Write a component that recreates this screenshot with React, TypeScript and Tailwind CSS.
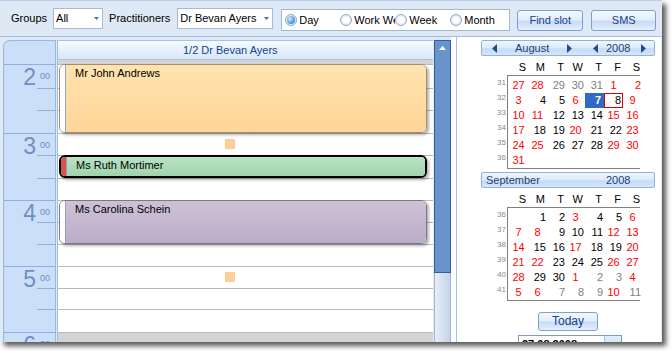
import React from 'react';

type Cell = { d: number | null; c: 'r' | 'k' | 'g'; sel?: boolean; box?: boolean; right?: boolean };

const r = (d: number, right = false): Cell => ({ d, c: 'r', right });
const k = (d: number): Cell => ({ d, c: 'k' });
const g = (d: number): Cell => ({ d, c: 'g' });

const august: { wk: number; cells: Cell[] }[] = [
  { wk: 31, cells: [r(27), r(28), g(29), g(30), g(31), r(1), r(2, true)] },
  { wk: 32, cells: [r(3), k(4), k(5), r(6), { d: 7, c: 'k', sel: true }, { d: 8, c: 'k', box: true }, r(9)] },
  { wk: 33, cells: [r(10), r(11), k(12), k(13), k(14), r(15), r(16)] },
  { wk: 34, cells: [r(17), k(18), k(19), r(20), k(21), k(22), r(23)] },
  { wk: 35, cells: [r(24), r(25), k(26), k(27), k(28), r(29), r(30)] },
  { wk: 36, cells: [r(31)] },
];

const september: { wk: number; cells: Cell[] }[] = [
  { wk: 36, cells: [{ d: null, c: 'k' }, k(1), k(2), r(3), k(4), k(5), r(6)] },
  { wk: 37, cells: [r(7), r(8), k(9), k(10), k(11), r(12), r(13)] },
  { wk: 38, cells: [r(14), k(15), k(16), r(17), k(18), k(19), r(20)] },
  { wk: 39, cells: [r(21), r(22), k(23), k(24), k(25), r(26), r(27)] },
  { wk: 40, cells: [r(28), k(29), k(30), r(1), g(2), g(3), r(4)] },
  { wk: 41, cells: [r(5), r(6), g(7), g(8), g(9), r(10), g(11)] },
];

// slot heights for each hour (20 min slots)
const hours = [
  { h: '2', rows: ['h-[24px]', 'h-[22px]', 'h-[23px]'] },
  { h: '3', rows: ['h-[22px]', 'h-[23px]', 'h-[22px]'] },
  { h: '4', rows: ['h-[22px]', 'h-[22px]', 'h-[22px]'] },
  { h: '5', rows: ['h-[22px]', 'h-[21px]', 'h-[23px]'] },
  { h: '6', rows: ['h-[22px]', 'h-[22px]', 'h-[22px]'] },
];

const Arrow = ({ dir, color = '#1f4e8c' }: { dir: 'l' | 'r' | 'd' | 'u'; color?: string }) => {
  if (dir === 'd')
    return (
      <svg width="5" height="3" viewBox="0 0 5 3">
        <polygon points="0,0 5,0 2.5,3" fill={color} />
      </svg>
    );
  if (dir === 'u')
    return (
      <svg width="7" height="4" viewBox="0 0 7 4">
        <polygon points="0,4 7,4 3.5,0" fill={color} />
      </svg>
    );
  return (
    <svg width="5" height="9" viewBox="0 0 5 9">
      {dir === 'l' ? <polygon points="5,0 5,9 0,4.5" fill={color} /> : <polygon points="0,0 0,9 5,4.5" fill={color} />}
    </svg>
  );
};

const Btn = ({ children, className }: { children: React.ReactNode; className: string }) => (
  <div
    className={`flex items-center justify-center rounded-[3px] border border-[#7f9fcf] bg-[linear-gradient(to_bottom,#f4f8fe_0%,#e3eefb_45%,#c8dcf6_55%,#d9e8fb_85%,#eaf2fd_100%)] text-[#15428b] ${className}`}
  >
    {children}
  </div>
);

const Select = ({ text, className }: { text: string; className: string }) => (
  <div className={`flex items-center h-[21px] bg-white border border-[#a5bcd9] pl-[2px] text-black ${className}`}>
    <span className="whitespace-nowrap">{text}</span>
    <span className="ml-auto mr-[3px] flex">
      <Arrow dir="d" color="#4a6fae" />
    </span>
  </div>
);

const Radio = ({ on, label }: { on?: boolean; label: string }) => (
  <div className="w-[55px] flex items-center overflow-hidden whitespace-nowrap">
    <span className="shrink-0 w-[12px] h-[12px] rounded-full border border-[#8ea8cb] bg-[radial-gradient(circle,#ffffff_35%,#c7d8ee_100%)] flex items-center justify-center">
      {on && (
        <span className="w-[8px] h-[8px] rounded-full bg-[radial-gradient(circle_at_35%_35%,#d8eeff_0%,#5aa2ea_55%,#2b6fc5_100%)]" />
      )}
    </span>
    <span className="ml-[2px] text-black">{label}</span>
  </div>
);

const Month = ({
  rows,
  header,
}: {
  rows: { wk: number; cells: Cell[] }[];
  header: React.ReactNode;
}) => (
  <div className="flex flex-col">
    {header}
    <div className="ml-[52px] mt-[4px] w-[133px] h-[15px] grid grid-cols-[repeat(7,19px)] text-black">
      {['S', 'M', 'T', 'W', 'T', 'F', 'S'].map((d, i) => (
        <div key={i} className="flex items-center justify-end pr-[2px]">
          {d}
        </div>
      ))}
    </div>
    <div className="ml-[40px] flex">
      <div className="w-[10px] pt-[3px] flex flex-col">
        {rows.map(row => (
          <div key={row.wk} className="h-[15px] pr-[3px] text-right text-[8px] leading-[10px] text-[#8a8a8a]">
            {row.wk}
          </div>
        ))}
      </div>
      <div className="w-[133px] border-l border-t border-b border-[#808080] pl-[1px] pt-[2px]">
        {rows.map(row => (
          <div key={row.wk} className="h-[15px] grid grid-cols-[repeat(7,19px)]">
            {row.cells.map((c, i) => {
              let cls = 'flex items-center ';
              if (c.sel) cls += 'justify-end pr-[3px] bg-[#316ac5] text-white font-bold';
              else if (c.box) cls += 'justify-end pr-[1px] border border-[#e00000] text-black';
              else if (c.c === 'r') cls += (c.right ? 'justify-end pr-[1px]' : 'justify-center') + ' text-[#ff0000]';
              else if (c.c === 'g') cls += 'justify-end pr-[1px] text-[#808080]';
              else cls += 'justify-end pr-[1px] text-black';
              return (
                <div key={i} className={cls}>
                  {c.d}
                </div>
              );
            })}
          </div>
        ))}
      </div>
    </div>
  </div>
);

const Appointment = ({
  name,
  className,
  body,
  strip,
  border,
}: {
  name: string;
  className: string;
  body: string;
  strip: string;
  border: string;
}) => (
  <div
    className={`absolute left-[1px] w-[368px] flex overflow-hidden rounded-[6px] shadow-[2px_2px_3px_rgba(0,0,0,0.3)] ${border} ${className}`}
  >
    <div className={`w-[6px] shrink-0 border-r border-[#8ea4cc] ${strip}`} />
    <div className={`flex-1 pl-[9px] pt-[2px] text-black ${body}`}>{name}</div>
  </div>
);

export default function App() {
  return (
    <div className="w-[672px] h-[351px] bg-white overflow-hidden font-['Liberation_Sans',Arial,sans-serif] text-[11px] leading-[13px]">
      <div className="w-[662px] h-[342px] flex flex-col overflow-hidden bg-[#e0eaf6] shadow-[4px_4px_5px_rgba(0,0,0,0.65)]">
        {/* toolbar */}
        <div className="h-[37px] shrink-0 flex items-start border-t border-b border-t-[#bcd0ec] border-b-[#a4bedf] bg-[#dfe9f6]">
          <div className="ml-[11px] mt-[7px] h-[21px] flex items-center text-black">Groups</div>
          <Select text="All" className="ml-[6px] mt-[7px] w-[50px]" />
          <div className="ml-[6px] mt-[7px] h-[21px] flex items-center text-black">Practitioners</div>
          <Select text="Dr Bevan Ayers" className="ml-[7px] mt-[7px] w-[96px]" />
          <div className="ml-[8px] mt-[8px] w-[229px] h-[22px] bg-white border border-[#a3b7d0] flex items-center pl-[3px]">
            <Radio on label="Day" />
            <Radio label="Work Week" />
            <Radio label="Week" />
            <Radio label="Month" />
          </div>
          <Btn className="ml-[7px] mt-[9px] w-[66px] h-[21px]">Find slot</Btn>
          <Btn className="ml-[8px] mt-[9px] w-[65px] h-[21px]">SMS</Btn>
        </div>

        {/* main */}
        <div className="flex-1 flex min-h-0">
          <div className="flex pt-[3px] pl-[3px] min-h-0">
            {/* time column */}
            <div className="w-[53px] shrink-0 flex flex-col bg-[#cbdff8] border-l border-r border-t border-[#98b7e1] rounded-tl-[7px] overflow-hidden text-[#6f8fc2]">
              <div className="h-[23px] shrink-0" />
              {hours.map(hr => (
                <div key={hr.h} className="flex flex-col shrink-0">
                  {hr.rows.map((h, i) =>
                    i === 0 ? (
                      <div key={i} className={`${h} border-t border-[#8db0de] flex justify-end items-start pr-[5px] pt-[1px]`}>
                        <span className="text-[23px] leading-[23px]">{hr.h}</span>
                        <span className="ml-[4px] mt-[6px] text-[9px] leading-[9px]">00</span>
                      </div>
                    ) : (
                      <div key={i} className={`${h} flex flex-col`}>
                        <div className="ml-[33px] border-t border-[#8db0de]" />
                      </div>
                    )
                  )}
                </div>
              ))}
            </div>

            {/* day column */}
            <div className="ml-[1px] w-[376px] shrink-0 flex flex-col bg-white border-l border-[#9dbbe3] overflow-hidden">
              <div className="h-[20px] shrink-0 flex items-center pl-[125px] border-t border-b border-[#a7c2e6] bg-[linear-gradient(to_bottom,#f7fbff,#d8e7f9)] text-[#15428b] whitespace-nowrap">
                1/2 Dr Bevan Ayers
              </div>
              <div className="h-[4px] shrink-0 bg-[#d4d4d4]" />
              <div className="relative flex flex-col">
                {hours.slice(0, 4).map(hr =>
                  hr.rows.map((h, i) => <div key={hr.h + i} className={`${h} shrink-0 border-t border-[#bababa]`} />)
                )}
                <div className="h-[30px] shrink-0 border-t border-[#bababa] bg-[#d3d3d3]" />

                <Appointment
                  name="Mr John Andrews"
                  className="top-0 h-[69px]"
                  border="border border-[#a68d68]"
                  strip="bg-white"
                  body="bg-[linear-gradient(to_bottom,#ffe3b0,#fdd597)]"
                />
                <div className="absolute left-[167px] top-[75px] w-[10px] h-[10px] bg-[#fbcf97]" />
                <Appointment
                  name="Ms Ruth Mortimer"
                  className="top-[91px] h-[23px]"
                  border="border-2 border-black"
                  strip="bg-[#d9534a]"
                  body="bg-[linear-gradient(to_bottom,#b8e3c4,#a2d3ad)]"
                />
                <Appointment
                  name="Ms Carolina Schein"
                  className="top-[136px] h-[44px]"
                  border="border border-[#7e7886]"
                  strip="bg-white"
                  body="bg-[linear-gradient(to_bottom,#cdc1d7,#bbadc6)]"
                />
                <div className="absolute left-[167px] top-[208px] w-[10px] h-[10px] bg-[#fbcf97]" />
              </div>
            </div>

            {/* scrollbar */}
            <div className="ml-[1px] w-[17px] shrink-0 flex flex-col">
              <div className="h-[233px] shrink-0 bg-[#6a93cc] border border-[#2f5f9f] flex justify-center pt-[5px]">
                <Arrow dir="u" color="#ffffff" />
              </div>
              <div className="flex-1 border-x border-[#9fb5d3] bg-[linear-gradient(to_right,#e6edf6,#c4d4e8)]" />
            </div>
          </div>

          {/* divider */}
          <div className="w-[6px] shrink-0 bg-white border-r border-[#a9c0de]" />

          {/* calendar */}
          <div className="w-[204px] shrink-0 bg-white flex flex-col pt-[3px] overflow-hidden">
            <Month
              rows={august}
              header={
                <div className="ml-[24px] w-[174px] h-[16px] shrink-0 flex items-center pl-[10px] rounded-[2px] border border-[#8db2e3] bg-[linear-gradient(to_bottom,#eef5fe_0%,#dceafb_50%,#c6dbf4_55%,#d6e6f9_100%)] text-[#1e3f73]">
                  <Arrow dir="l" />
                  <span className="w-[18px]" />
                  <span className="w-[52px] whitespace-nowrap">August</span>
                  <Arrow dir="r" />
                  <span className="w-[21px]" />
                  <Arrow dir="l" />
                  <span className="ml-[8px] w-[35px]">2008</span>
                  <Arrow dir="r" />
                </div>
              }
            />
            <div className="mt-[3px]">
              <Month
                rows={september}
                header={
                  <div className="ml-[24px] w-[174px] h-[16px] shrink-0 flex items-center pl-[4px] rounded-[2px] border border-[#8db2e3] bg-[linear-gradient(to_bottom,#eef5fe_0%,#dceafb_50%,#c6dbf4_55%,#d6e6f9_100%)] text-[#1e3f73]">
                    <span className="w-[120px] whitespace-nowrap">September</span>
                    <span>2008</span>
                  </div>
                }
              />
            </div>
            <Btn className="ml-[81px] mt-[11px] w-[60px] h-[19px] shrink-0 text-[12px]">Today</Btn>
            <div className="ml-[61px] mt-[4px] w-[104px] h-[20px] shrink-0 flex border border-[#7f9db9] bg-white">
              <span className="pl-[3px] pt-[2px] font-bold text-black">27.08.2008</span>
              <span className="ml-auto w-[17px] bg-[linear-gradient(to_bottom,#e3eefc,#bcd3f1)] border-l border-[#a9c2e6]" />
            </div>
          </div>
        </div>
      </div>
    </div>
  );
}
